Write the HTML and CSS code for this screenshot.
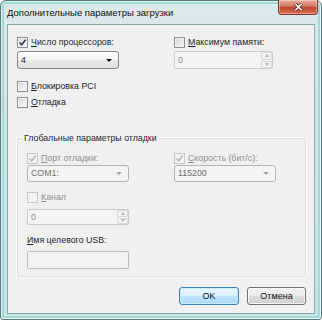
FILE: index.html
```html
<!DOCTYPE html>
<html lang="ru">
  <head>
    <meta charset="UTF-8" />
    <meta name="viewport" content="width=device-width, initial-scale=1.0" />
    <title>Дополнительные параметры загрузки</title>
    <link rel="stylesheet" href="styles.css">
  </head>
  <body>
    <div class="window--frame">
      <div class="title--bar">
        <span class="title--text">Дополнительные параметры загрузки</span>
        <span class="close--btn">
          <svg width="9" height="8" viewBox="0 0 9 8">
            <path d="M1 0.5 L8 7.5 M8 0.5 L1 7.5" stroke="#6a3026" stroke-width="3.2" />
            <path d="M1.3 0.8 L7.7 7.2 M7.7 0.8 L1.3 7.2" stroke="#fff" stroke-width="1.6" />
          </svg>
        </span>
      </div>

      <div class="client--area">
        <div class="two--cols">
          <div class="field">
            <label class="check">
              <span class="box">
                <svg width="9" height="9" viewBox="0 0 9 9"><path d="M1.5 4.5 L3.7 6.8 L7.6 1.8" /></svg>
              </span>
              <span><u>Ч</u>исло процессоров:</span>
            </label>
            <div class="combo">
              <span>4</span>
              <span class="arrow"></span>
            </div>
          </div>
          <div class="field">
            <label class="check">
              <span class="box"></span>
              <span><u>М</u>аксимум памяти:</span>
            </label>
            <div class="spin spin--top">
              <span class="spin--value">0</span>
              <span class="spin--btns">
                <span class="spin--btn"><span class="up"></span></span>
                <span class="spin--btn"><span class="down"></span></span>
              </span>
            </div>
          </div>
        </div>

        <label class="check check--pci">
          <span class="box"></span>
          <span><u>Б</u>локировка PCI</span>
        </label>
        <label class="check check--debug">
          <span class="box"></span>
          <span><u>О</u>тладка</span>
        </label>

        <fieldset class="group--box">
          <legend>Глобальные параметры отладки</legend>
          <div class="two--cols inner">
            <div class="field">
              <label class="check dim">
                <span class="box">
                  <svg width="9" height="9" viewBox="0 0 9 9"><path d="M1.5 4.5 L3.7 6.8 L7.6 1.8" /></svg>
                </span>
                <span><u>П</u>орт отладки:</span>
              </label>
              <div class="combo disabled">
                <span>COM1:</span>
                <span class="arrow"></span>
              </div>
            </div>
            <div class="field">
              <label class="check dim">
                <span class="box">
                  <svg width="9" height="9" viewBox="0 0 9 9"><path d="M1.5 4.5 L3.7 6.8 L7.6 1.8" /></svg>
                </span>
                <span><u>С</u>корость (бит/с):</span>
              </label>
              <div class="combo disabled">
                <span>115200</span>
                <span class="arrow"></span>
              </div>
            </div>
          </div>

          <div class="field channel">
            <label class="check dim">
              <span class="box"></span>
              <span><u>К</u>анал</span>
            </label>
            <div class="spin">
              <span class="spin--value">0</span>
              <span class="spin--btns">
                <span class="spin--btn"><span class="up"></span></span>
                <span class="spin--btn"><span class="down"></span></span>
              </span>
            </div>
          </div>

          <div class="field usb">
            <span class="plain--label"><u>И</u>мя целевого USB:</span>
            <div class="textbox"></div>
          </div>
        </fieldset>

        <div class="buttons--row">
          <a class="btn default">OK</a>
          <a class="btn">Отмена</a>
        </div>
      </div>
    </div>
  </body>
</html>
```

FILE: styles.css
```css
* {
  box-sizing: border-box;
  margin: 0;
  padding: 0;
}
body {
  background: #fff;
  font-family: "Liberation Sans", Arial, sans-serif;
  color: #1e1e1e;
}
u {
  text-decoration: underline;
  text-underline-offset: 1px;
}

/* window chrome */
.window--frame {
  width: 322px;
  height: 320px;
  border: 1px solid #56797b;
  border-radius: 6px 6px 3px 3px;
  background: linear-gradient(180deg, #dbeaec 0%, #d2e6e8 30%, #c6e3e4 100%);
  box-shadow: inset 0 0 0 1px #e6f5f5, inset 0 0 0 3px #a2d8d8;
  display: flex;
  flex-direction: column;
  padding: 0 6px 5px 6px;
}
.title--bar {
  height: 23px;
  display: flex;
  align-items: flex-start;
  justify-content: space-between;
}
.title--text {
  font-size: 9.5px;
  line-height: 23px;
  color: #111;
}
.close--btn {
  width: 40px;
  height: 15px;
  margin-top: -1px;
  margin-right: -3px;
  border: 1px solid #7a3a32;
  border-top: none;
  border-radius: 0 0 4px 4px;
  background: linear-gradient(180deg, #e9ab9e 0%, #d6806d 40%, #c3452e 55%, #d66b4f 100%);
  box-shadow: inset 0 0 0 1px rgba(255, 225, 215, 0.45);
  display: flex;
  align-items: center;
  justify-content: center;
}
.client--area {
  flex: 1;
  background: #f0f0f0;
  border: 1px solid #87a9ac;
  padding: 12px 8px 0 9px;
  font-size: 8.8px;
}

/* controls */
.two--cols {
  display: grid;
  grid-template-columns: 157px 1fr;
}
.two--cols.inner {
  grid-template-columns: 147px 1fr;
}
.field {
  display: flex;
  flex-direction: column;
}
.check {
  display: flex;
  align-items: center;
  gap: 3px;
  height: 11px;
  line-height: 11px;
  white-space: nowrap;
}
.check.dim {
  color: #8f8f8f;
}
.box {
  width: 11px;
  height: 11px;
  border: 1px solid #8e8f8f;
  background: linear-gradient(135deg, #d4d4d4 0%, #ebebeb 55%, #f8f8f8 100%);
  box-shadow: inset 0 0 0 1px #f2f2f2;
  display: flex;
  align-items: center;
  justify-content: center;
  flex-shrink: 0;
}
.box path {
  fill: none;
  stroke: #283650;
  stroke-width: 1.5;
}
.dim .box {
  border-color: #c6c8ca;
  background: #f4f4f4;
}
.dim .box path {
  stroke: #b0b3b6;
}
.combo {
  width: 102px;
  height: 18px;
  margin-top: 3px;
  border: 1px solid #858585;
  border-radius: 3px;
  background: linear-gradient(180deg, #fcfcfc 0%, #f3f3f3 50%, #e8e8e8 51%, #e0e0e0 100%);
  display: flex;
  align-items: center;
  justify-content: space-between;
  padding: 0 6px 0 3px;
  line-height: 16px;
}
.arrow {
  width: 0;
  height: 0;
  border-left: 3px solid transparent;
  border-right: 3px solid transparent;
  border-top: 3.5px solid #111;
}
.combo.disabled {
  height: 17px;
  margin-top: 1px;
  background: #f4f4f4;
  border-color: #b0b5b8;
  color: #6d6d6d;
  line-height: 15px;
}
.combo.disabled .arrow {
  border-top-color: #a8a8a8;
}
.spin {
  width: 102px;
  height: 16px;
  margin-top: 6px;
  border: 1px solid #c9cbcd;
  border-radius: 2px;
  background: #f4f4f4;
  display: flex;
  justify-content: space-between;
  color: #8d8d8d;
}
.spin--top {
  width: 99px;
  height: 18px;
  margin-top: 3px;
}
.spin--value {
  padding-left: 3px;
  line-height: 14px;
}
.spin--top .spin--value {
  line-height: 16px;
}
.spin--btns {
  width: 11px;
  display: flex;
  flex-direction: column;
  gap: 1px;
}
.spin--btn {
  flex: 1;
  border: 1px solid #d6d8da;
  border-radius: 1px;
  background: #f2f2f2;
  display: flex;
  align-items: center;
  justify-content: center;
}
.up,
.down {
  width: 0;
  height: 0;
  border-left: 2.5px solid transparent;
  border-right: 2.5px solid transparent;
}
.up {
  border-bottom: 3px solid #b5b5b5;
}
.down {
  border-top: 3px solid #b5b5b5;
}
.check--pci {
  margin-top: 12px;
}
.check--debug {
  margin-top: 5px;
}

/* group */
.group--box {
  margin-top: 24px;
  border: 1px solid #d5dfe5;
  border-radius: 2px;
  box-shadow: 0 0 0 1px rgba(255, 255, 255, 0.7);
  padding: 9px 9px 7px 9px;
}
.group--box legend {
  margin-left: -5px;
  padding: 0 2px;
  line-height: 12px;
}
.channel {
  margin-top: 10px;
}
.usb {
  margin-top: 9px;
}
.plain--label {
  line-height: 12px;
}
.textbox {
  width: 102px;
  height: 18px;
  margin-top: 5px;
  border: 1px solid #b9bcc0;
  border-radius: 2px;
  background: #f4f4f4;
}

/* buttons */
.buttons--row {
  display: flex;
  justify-content: flex-end;
  gap: 8px;
  margin-top: 10px;
}
.btn {
  width: 59px;
  height: 18px;
  border: 1px solid #707070;
  border-radius: 3px;
  background: linear-gradient(180deg, #f2f2f2 0%, #ebebeb 50%, #dddddd 51%, #cfcfcf 100%);
  box-shadow: inset 0 0 0 1px rgba(255, 255, 255, 0.8);
  text-align: center;
  line-height: 16px;
  font-size: 9px;
  color: #111;
  cursor: pointer;
}
.btn.default {
  width: 60px;
  border-color: #3c7fb1;
  background: linear-gradient(180deg, #eaf6fd 0%, #d9f0fc 50%, #bee6fd 51%, #a7d9f5 100%);
  box-shadow: inset 0 0 0 1px #c9ecfd;
}
```
